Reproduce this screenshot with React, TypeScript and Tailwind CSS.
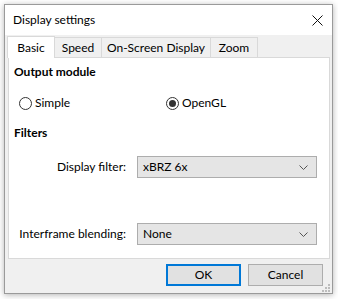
import React from 'react';

const font = { fontFamily: 'Lato, "Noto Sans", sans-serif' };

function Radio({ checked, label }: { checked?: boolean; label: string }) {
  return (
    <div className="flex items-center gap-[3px]">
      <div className="w-[13px] h-[13px] rounded-full border border-[#333] bg-white flex items-center justify-center">
        {checked && <div className="w-[7px] h-[7px] rounded-full bg-[#333]" />}
      </div>
      <span className="text-[12px] leading-[16px] text-black">{label}</span>
    </div>
  );
}

function Select({ value }: { value: string }) {
  return (
    <div className="ml-[11px] w-[180px] h-[22px] bg-[#e5e5e5] border border-[#adadad] flex items-center justify-between pl-[5px] pr-[8px]">
      <span className="text-[12px] leading-[16px] text-black">{value}</span>
      <svg width="9" height="5" viewBox="0 0 9 5">
        <path d="M0.5 0.5 L4.5 4.5 L8.5 0.5" fill="none" stroke="#555" strokeWidth="1" />
      </svg>
    </div>
  );
}

export default function App() {
  const tabs = [
    { name: 'Speed', w: 'w-[47px]' },
    { name: 'On-Screen Display', w: 'w-[109px]' },
    { name: 'Zoom', w: 'w-[47px]' },
  ];

  return (
    <div className="w-[338px] h-[299px] bg-white pt-[4px] pl-[4px]" style={font}>
      <div className="relative w-[329px] h-[290px] border border-[#9a9a9a] bg-[#f0f0f0] flex flex-col shadow-[0_1px_6px_rgba(0,0,0,0.3)]">
        {/* Title bar */}
        <div className="h-[30px] bg-white flex items-center justify-between pl-[8px] pr-[9px]">
          <span className="text-[12px] leading-[16px] text-black">Display settings</span>
          <svg width="11" height="11" viewBox="0 0 11 11">
            <path d="M0.5 0.5 L10.5 10.5 M10.5 0.5 L0.5 10.5" stroke="#111" strokeWidth="1" />
          </svg>
        </div>

        {/* Tabs */}
        <div className="flex items-end h-[22px] pl-[2px]">
          <div className="relative z-10 w-[48px] h-[22px] -mb-px bg-white border border-b-0 border-[#d9d9d9] flex items-center justify-center text-[12px] text-black">
            Basic
          </div>
          {tabs.map((t) => (
            <div
              key={t.name}
              className={`${t.w} h-[20px] bg-[#f0f0f0] border border-l-0 border-b-0 border-[#d9d9d9] flex items-center justify-center text-[12px] text-black`}
            >
              {t.name}
            </div>
          ))}
        </div>

        {/* Panel */}
        <div className="ml-[3px] w-[322px] h-[202px] bg-white border border-[#d9d9d9] flex flex-col">
          <div className="pl-[5px] pt-[6px] text-[12px] leading-[16px] font-bold text-black">Output module</div>
          <div className="mt-[15px] pl-[10px] flex items-center">
            <div className="w-[147px]">
              <Radio label="Simple" />
            </div>
            <Radio checked label="OpenGL" />
          </div>
          <div className="mt-[14px] pl-[5px] text-[12px] leading-[16px] font-bold text-black">Filters</div>
          <div className="mt-[15px] flex items-center">
            <span className="w-[117px] flex justify-end whitespace-nowrap text-[12px] leading-[16px] text-black">Display filter:</span>
            <Select value="xBRZ 6x" />
          </div>
          <div className="mt-[45px] flex items-center">
            <span className="w-[117px] flex justify-end whitespace-nowrap text-[12px] leading-[16px] text-black">Interframe blending:</span>
            <Select value="None" />
          </div>
        </div>

        {/* Buttons */}
        <div className="mt-[5px] flex justify-end gap-[7px] pr-[9px]">
          <button className="w-[75px] h-[22px] bg-[#e1e1e1] border-2 border-[#0078d7] text-[12px] text-black flex items-center justify-center">
            OK
          </button>
          <button className="w-[75px] h-[22px] bg-[#e1e1e1] border border-[#adadad] text-[12px] text-black flex items-center justify-center">
            Cancel
          </button>
        </div>

        {/* Resize grip */}
        <svg className="absolute right-[2px] bottom-[1px]" width="9" height="9" viewBox="0 0 9 9">
          <rect x="7" y="1" width="2" height="2" fill="#bcbcbc" />
          <rect x="4" y="4" width="2" height="2" fill="#bcbcbc" />
          <rect x="7" y="4" width="2" height="2" fill="#bcbcbc" />
          <rect x="1" y="7" width="2" height="2" fill="#bcbcbc" />
          <rect x="4" y="7" width="2" height="2" fill="#bcbcbc" />
          <rect x="7" y="7" width="2" height="2" fill="#bcbcbc" />
        </svg>
      </div>
    </div>
  );
}
